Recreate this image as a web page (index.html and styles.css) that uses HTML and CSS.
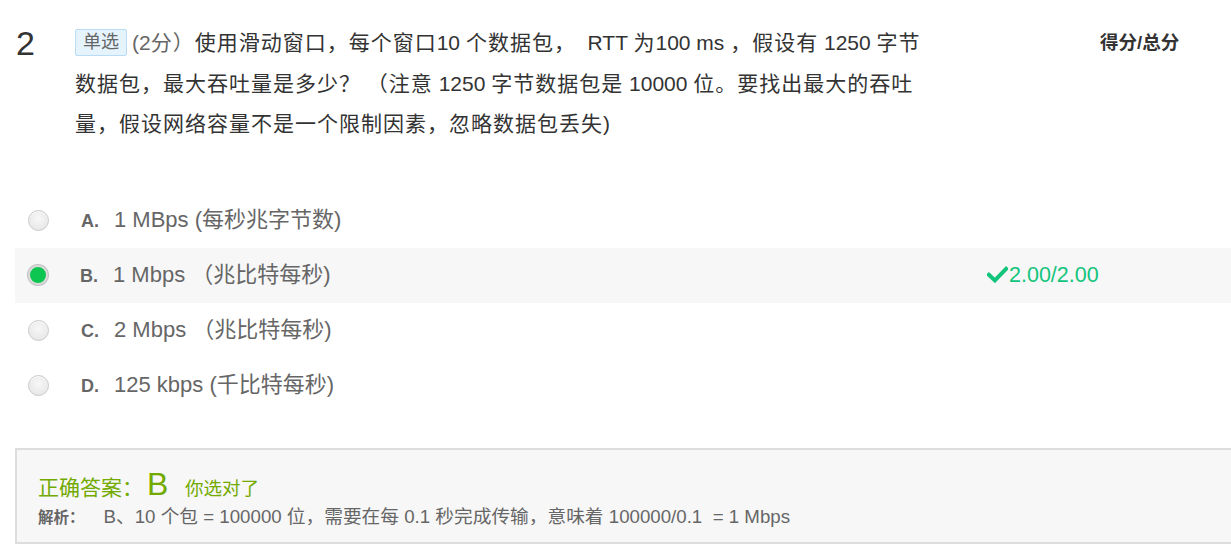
FILE: index.html
```html
<!DOCTYPE html>
<html lang="zh-CN">
<head>
<meta charset="utf-8">
<title>题目 2</title>
<link rel="stylesheet" href="styles.css">
</head>
<body>
<div class="question">
  <div class="q-head">
    <div class="q-num">2</div>
    <div class="q-text">
      <span class="tag">单选</span><span class="points"><span class="en">(2</span>分）</span>使用滑动窗口，每个窗口<span class="en">10 </span>个数据包，<span class="en">&nbsp; RTT </span>为<span class="en">100 ms </span>，假设有<span class="en"> 1250 </span>字节<br>数据包，最大吞吐量是多少？<span class="en"> </span>（注意<span class="en"> 1250 </span>字节数据包是<span class="en"> 10000 </span>位。要找出最大的吞吐<br>量，假设网络容量不是一个限制因素，忽略数据包丢失<span class="en">)</span>
    </div>
    <div class="q-score">得分/总分</div>
  </div>

  <ul class="options">
    <li class="option">
      <span class="radio"></span>
      <span class="opt-body">
        <span class="opt-label">A.</span>
        <span class="opt-text">1 MBps (每秒兆字节数)</span>
      </span>
    </li>
    <li class="option selected">
      <span class="radio checked"></span>
      <span class="opt-body">
        <span class="opt-label">B.</span>
        <span class="opt-text">1 Mbps （兆比特每秒)</span>
        <span class="opt-score"><svg class="check" viewBox="0 0 20 16" width="21" height="17"><path d="M1.8 8.2 L7.5 13.6 L18.2 2.6" fill="none" stroke="currentColor" stroke-width="3.8" stroke-linecap="square"/></svg>2.00/2.00</span>
      </span>
    </li>
    <li class="option">
      <span class="radio"></span>
      <span class="opt-body">
        <span class="opt-label">C.</span>
        <span class="opt-text">2 Mbps （兆比特每秒)</span>
      </span>
    </li>
    <li class="option">
      <span class="radio"></span>
      <span class="opt-body">
        <span class="opt-label">D.</span>
        <span class="opt-text">125 kbps (千比特每秒)</span>
      </span>
    </li>
  </ul>

  <div class="analysis">
    <div class="answer-line">
      <span class="answer-title">正确答案：</span><span class="answer-key">B</span><span class="answer-ok">你选对了</span>
    </div>
    <div class="explain">
      <span class="explain-title">解析：</span><span class="explain-text">B、10 个包 = 100000 位，需要在每 0.1 秒完成传输，意味着 100000/0.1&nbsp; = 1 Mbps</span>
    </div>
  </div>
</div>
</body>
</html>
```

FILE: styles.css
```css
* { box-sizing: border-box; }

html, body {
  margin: 0;
  padding: 0;
  background: #fff;
  overflow: hidden;
}

body {
  font-family: "Liberation Sans", Arial, "Noto Sans CJK SC", sans-serif;
  color: #333;
}

.question {
  padding: 23px 0 0 15px;
}

.q-head {
  display: flex;
  align-items: flex-start;
}

.q-num {
  width: 60px;
  font-size: 34px;
  line-height: 40px;
  color: #333;
  padding-left: 1px;
}

.q-text {
  width: 1025px;
  font-size: 21px;
  letter-spacing: 1px;
  line-height: 40.5px;
  color: #333;
  white-space: nowrap;
}

.en {
  font-size: 21px;
  letter-spacing: 0;
}

.tag {
  display: inline-block;
  font-size: 18px;
  letter-spacing: 0;
  line-height: 25px;
  padding: 0 7px;
  border: 1px solid #b8dcf5;
  border-radius: 2px;
  background: #e5f3fd;
  color: #666;
  margin-right: 5px;
  vertical-align: 2px;
}

.points { color: #666; }

.q-score {
  font-size: 18.5px;
  font-weight: bold;
  line-height: 40px;
  color: #333;
}

.options {
  list-style: none;
  margin: 48px 0 0 0;
  padding: 0;
}

.option {
  display: flex;
  align-items: center;
  height: 55px;
  padding-left: 13px;
  color: #666;
}

.option.selected { background: #f7f7f7; }

.opt-body {
  display: flex;
  align-items: baseline;
  font-size: 22px;
  line-height: 26px;
}

.radio {
  width: 21px;
  height: 21px;
  border-radius: 50%;
  border: 1px solid #c9c9c9;
  background: radial-gradient(circle at 50% 40%, #f7f7f7 0%, #e9e9e9 70%, #dcdcdc 100%);
  box-shadow: inset 0 1px 1px rgba(255,255,255,0.8);
  flex: none;
}

.radio.checked {
  background: #0dc551;
  border: 2px solid #dcdcdc;
  box-shadow: 0 0 0 1px #c2c2c2;
  width: 20px;
  height: 20px;
}

.opt-label {
  font-weight: bold;
  font-size: 18px;
  margin-left: 32px;
  width: 33px;
}

.opt-text {
  width: 874px;
}

.opt-score {
  color: #13c47c;
  font-size: 21.5px;
}

.check {
  margin-right: 1px;
  vertical-align: -1px;
}

.analysis {
  margin-top: 35px;
  margin-right: -20px;
  height: 96px;
  background: #f7f7f7;
  border: 2px solid #dddddd;
  padding: 16px 0 0 21px;
}

.answer-line {
  display: flex;
  align-items: baseline;
  color: #73aa00;
  height: 38px;
}

.answer-title { font-size: 21px; }

.answer-key {
  font-size: 32px;
  margin-left: 4px;
  width: 38px;
}

.answer-ok { font-size: 18.5px; }

.explain {
  color: #666;
  font-size: 18.7px;
  margin-top: -3px;
}

.explain-title {
  font-weight: bold;
  font-size: 15.5px;
  margin-right: 19px;
}
```
